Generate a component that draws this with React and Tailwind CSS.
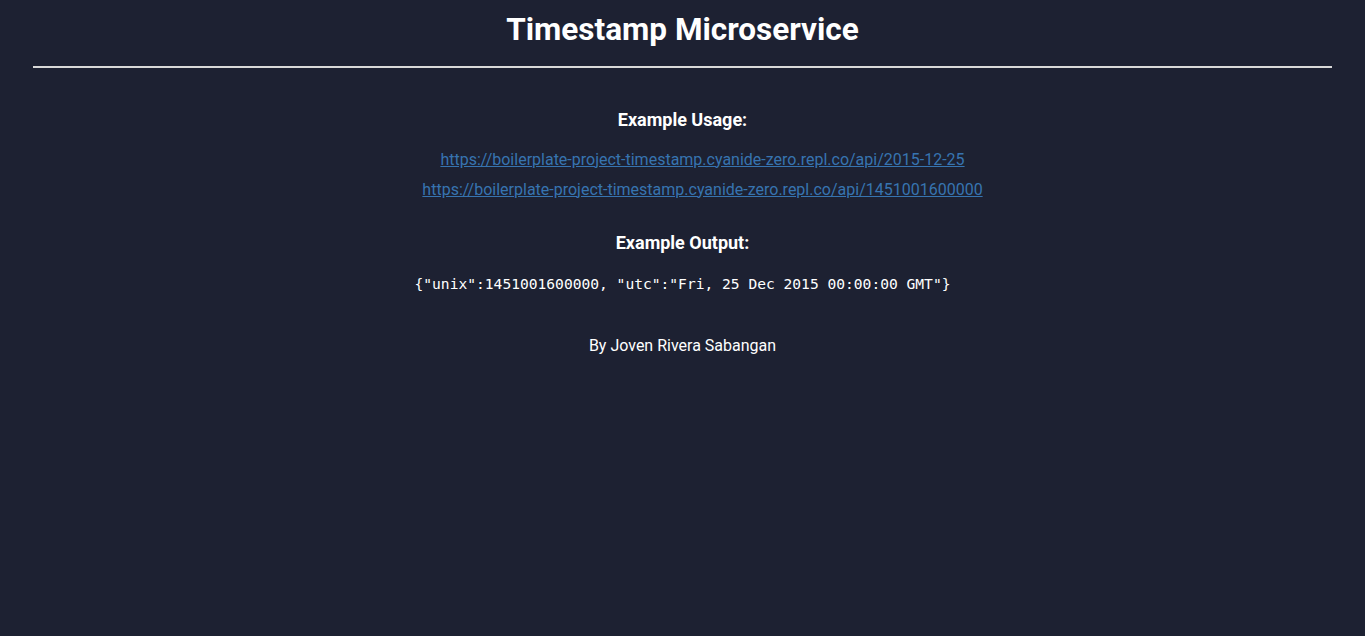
export default function App() {
  return (
    <div className="min-h-screen bg-[#1d2132] text-white font-['Roboto',sans-serif] px-[33px]">
      <header className="text-center">
        <h1 className="text-[31.5px] font-bold leading-none pt-[14px] pb-[20px]">Timestamp Microservice</h1>
        <hr className="border-0 h-[2px] bg-[#d8d8d8]" />
      </header>
      <main className="text-center">
        <h3 className="text-lg font-bold mt-[38px] mb-[16px]">Example Usage:</h3>
        <ul className="flex flex-col items-center gap-[10px] text-[16px] leading-[20px] pl-10">
          <li><a href="#" className="text-[#3774b0] underline">https://boilerplate-project-timestamp.cyanide-zero.repl.co/api/2015-12-25</a></li>
          <li><a href="#" className="text-[#3774b0] underline">https://boilerplate-project-timestamp.cyanide-zero.repl.co/api/1451001600000</a></li>
        </ul>
        <h3 className="text-lg font-bold mt-[29px] mb-[15px]">Example Output:</h3>
        <code className="font-['DejaVu_Sans_Mono',monospace] text-[14.6px]">{'{"unix":1451001600000, "utc":"Fri, 25 Dec 2015 00:00:00 GMT"}'}</code>
        <p className="mt-[38px] text-[16px]">By Joven Rivera Sabangan</p>
      </main>
    </div>
  );
}
